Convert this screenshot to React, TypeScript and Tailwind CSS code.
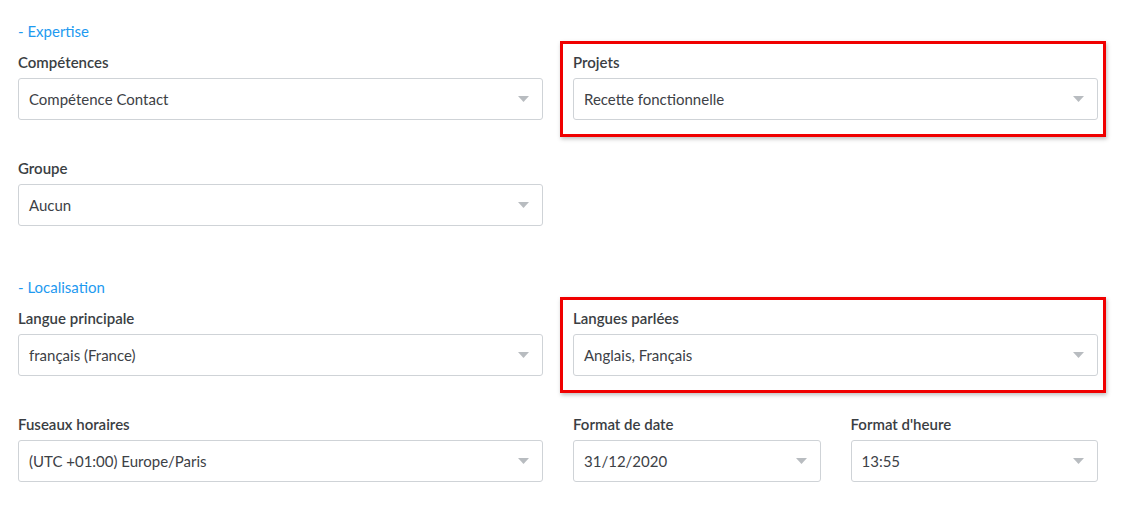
import React from "react";

function Caret() {
  return (
    <svg width="11" height="6" viewBox="0 0 11 6" className="shrink-0">
      <path d="M0 0 H11 L5.5 6 Z" fill="#b8bcc0" />
    </svg>
  );
}

function Select({ label, value }: { label: string; value: string }) {
  return (
    <div>
      <p className="text-[15px] leading-[20px] font-semibold text-[#3a3e43]">{label}</p>
      <div className="mt-[6px] flex h-[42px] items-center justify-between rounded-[3px] border border-[#cfd3d7] bg-white pl-[10px] pr-[13px]">
        <span className="text-[15px] leading-[20px] text-[#3d4146]">{value}</span>
        <Caret />
      </div>
    </div>
  );
}

function Highlight({ children }: { children: React.ReactNode }) {
  return (
    <div className="relative">
      {children}
      <div className="pointer-events-none absolute -left-[13px] -right-[8px] -top-[11px] -bottom-[17px] border-[3px] border-[#f00000] shadow-[1px_2px_4px_rgba(0,0,0,0.25)]" />
    </div>
  );
}

function Section({ title }: { title: string }) {
  return <p className="text-[15px] leading-[20px] text-[#1e9af0]">- {title}</p>;
}

export default function App() {
  return (
    <div className="min-h-screen w-[1121px] bg-white px-[18px] pt-[21px] font-['Lato','Open_Sans',sans-serif]">
      <div className="w-[1080px]">
        <Section title="Expertise" />
        <div className="mt-[11px] grid grid-cols-2 gap-x-[30px] gap-y-[38px]">
          <Select label="Compétences" value="Compétence Contact" />
          <Highlight>
            <Select label="Projets" value="Recette fonctionnelle" />
          </Highlight>
          <Select label="Groupe" value="Aucun" />
        </div>

        <div className="mt-[51px]">
          <Section title="Localisation" />
        </div>
        <div className="mt-[11px] grid grid-cols-2 gap-x-[30px] gap-y-[38px]">
          <Select label="Langue principale" value="français (France)" />
          <Highlight>
            <Select label="Langues parlées" value="Anglais, Français" />
          </Highlight>
          <Select label="Fuseaux horaires" value="(UTC +01:00) Europe/Paris" />
          <div className="grid grid-cols-2 gap-x-[30px]">
            <Select label="Format de date" value="31/12/2020" />
            <Select label="Format d'heure" value="13:55" />
          </div>
        </div>
      </div>
    </div>
  );
}
